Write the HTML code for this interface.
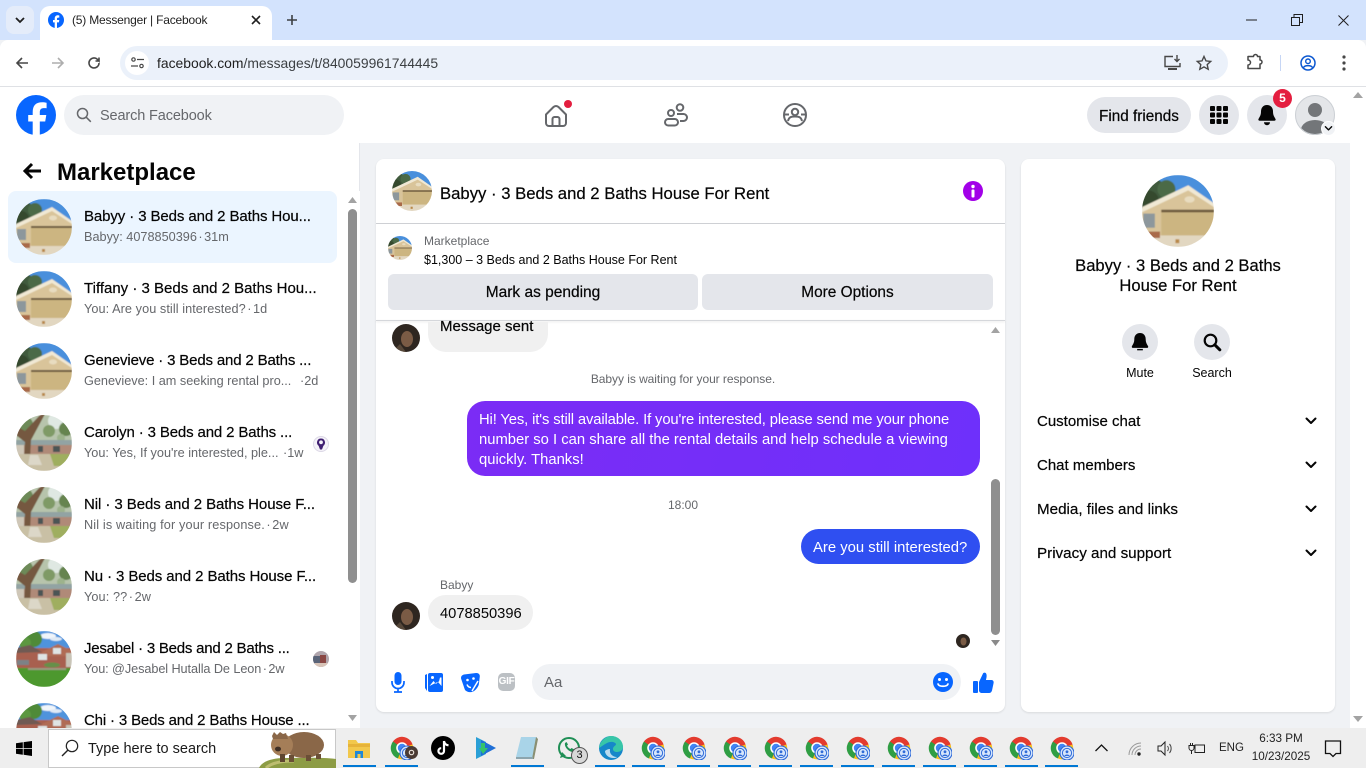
<!DOCTYPE html>
<html><head><meta charset="utf-8"><title>(5) Messenger | Facebook</title>
<style>
*{box-sizing:border-box}
html,body{margin:0;padding:0;width:1366px;height:768px;overflow:hidden;background:#f0f2f5;font-family:"Liberation Sans",sans-serif;color:#050505}
.a{position:absolute}
.t{position:absolute;white-space:nowrap}
.n{font-size:15px;line-height:20px;color:#050505;left:84px;-webkit-text-stroke:.2px #050505}
.s{font-size:12.7px;line-height:16px;color:#65676b;left:84px}
.s i{font-style:normal;margin:0 1.5px}
.av{position:absolute;left:16px;width:56px;height:56px}
.c{position:absolute;border-radius:50%;background:#e4e6eb}
.tb{position:absolute;top:765px;height:2px;width:33px;background:#0078d4}
svg{position:absolute;overflow:visible}
</style></head><body>
<svg width="0" height="0" style="position:absolute">
<defs>
<clipPath id="cp"><circle cx="28" cy="28" r="28"/></clipPath>
<filter id="bl" x="-5%" y="-5%" width="110%" height="110%"><feGaussianBlur stdDeviation=".45"/></filter>
<symbol id="h1" viewBox="0 0 56 56"><g clip-path="url(#cp)"><g filter="url(#bl)">
<rect width="56" height="56" fill="#4a8fdc"/>
<circle cx="9" cy="12" r="9" fill="#3f5a3c"/><circle cx="19" cy="11" r="7" fill="#4c6a47"/><circle cx="5" cy="20" r="8" fill="#34492f"/>
<path d="M0 27L36 10 56 24v32H0z" fill="#d9c49a"/>
<path d="M0 25L36 8 56 22v3L36 12 0 29z" fill="#f0e8d4"/>
<ellipse cx="37" cy="19" rx="4" ry="2.500" fill="#e8dcc0"/>
<rect x="15" y="28" width="41" height="20" fill="#ccb581"/><rect x="15" y="27" width="41" height="2" fill="#6d5a3d"/>
<rect x="1" y="30" width="9" height="11" fill="#8d979c"/>
<rect y="47" width="56" height="9" fill="#e2d7c1"/><rect x="0" y="44" width="14" height="5" fill="#a96b4a"/><rect x="26" y="50" width="3" height="3" fill="#b9894a"/>
</g></g></symbol>
<symbol id="h2" viewBox="0 0 56 56"><g clip-path="url(#cp)"><g filter="url(#bl)">
<rect width="56" height="56" fill="#b7c4ac"/>
<circle cx="8" cy="10" r="9" fill="#6d8a58"/><circle cx="40" cy="6" r="8" fill="#dfe8e2"/><circle cx="50" cy="14" r="7" fill="#668450"/><circle cx="33" cy="16" r="6" fill="#7f9a66"/><circle cx="45" cy="23" r="4" fill="#9db38c"/>
<rect y="25" width="56" height="5" fill="#92a3a3"/><rect y="30" width="56" height="9" fill="#b08a78"/>
<rect x="22" y="31" width="5" height="6" fill="#4b5555"/><rect x="37" y="31" width="7" height="6" fill="#4b5555"/><rect x="0" y="30" width="8" height="9" fill="#cfc7b8"/>
<path d="M0 11L9 16 25-1h4L15 25 14 44H8L9 27 0 20z" fill="#74593f"/>
<rect y="39" width="56" height="17" fill="#c9c0a5"/><path d="M34 39h22v12H38z" fill="#9fae5e"/><path d="M14 40h8l4 10H12z" fill="#dcd7c8"/>
</g></g></symbol>
<symbol id="h3" viewBox="0 0 56 56"><g clip-path="url(#cp)"><g filter="url(#bl)">
<rect width="56" height="56" fill="#4f93dc"/><ellipse cx="32" cy="5" rx="8" ry="3" fill="#f0f5fa"/><ellipse cx="40" cy="8" rx="6" ry="2" fill="#e0eaf5"/>
<circle cx="18" cy="8" r="8" fill="#4f8a38"/><circle cx="9" cy="12" r="6" fill="#5b973f"/>
<rect y="17" width="56" height="22" fill="#a8604f"/><path d="M0 17L14 14 26 21 0 22z" fill="#6f5a52"/><path d="M26 21L42 13 56 20v5H26z" fill="#b06c55"/>
<rect x="22" y="23" width="9" height="6" fill="#dfe4e4"/><rect x="37" y="17" width="8" height="6" fill="#dfe4e4"/><rect x="50" y="22" width="6" height="14" fill="#c9c5b8"/>
<rect x="1" y="29" width="12" height="5" fill="#7b8286"/><ellipse cx="36" cy="34" rx="8" ry="2.500" fill="#65904a"/>
<rect y="37" width="56" height="19" fill="#4e982f"/><path d="M12 37h38v2H12z" fill="#9a9a80"/>
</g></g></symbol>
<symbol id="ch" viewBox="0 0 24 24"><circle cx="12" cy="12" r="11" fill="#e33b2e"/><path d="M12 12L22.500 8.500A11 11 0 0 0 3 5.500z" fill="#e33b2e"/><path d="M12 12L3 5.500A11 11 0 0 0 8 22.500z" fill="#2f9e44"/><path d="M12 12L8 22.500A11 11 0 0 0 22.500 8.500z" fill="#f8c31c"/><circle cx="12" cy="12" r="5" fill="#4285f4" stroke="#fff" stroke-width="1.600"/>
<circle cx="17" cy="17" r="7" fill="#d7e6fb" stroke="#2f6bd8" stroke-width="1.100"/><circle cx="17" cy="17" r="4.600" fill="none" stroke="#2f6bd8" stroke-width="1"/><circle cx="17" cy="15.800" r="1.400" fill="#2f6bd8"/><path d="M14.300 20c.5-2 4.900-2 5.400 0" fill="#2f6bd8"/></symbol>
<symbol id="down" viewBox="0 0 16 16"><path d="M3.500 5.500L8 10l4.500-4.500" fill="none" stroke="#050505" stroke-width="2" stroke-linecap="round" stroke-linejoin="round"/></symbol>
</defs></svg>

<!-- Browser tab strip -->
<div class="a" style="left:0;top:0;width:1366px;height:40px;background:#d3e3fd"></div>
<div class="a" style="left:6px;top:6px;width:28px;height:28px;border-radius:8px;background:#e4ecfa"></div>
<svg style="left:14px;top:15px" width="12" height="10"><path d="M2 3l4 4 4-4" fill="none" stroke="#1f1f1f" stroke-width="1.800"/></svg>
<div class="a" style="left:40px;top:6px;width:232px;height:36px;background:#fff;border-radius:10px 10px 0 0"></div>
<svg style="left:48px;top:12px" width="16" height="16" viewBox="0 0 16 16"><circle cx="8" cy="8" r="8" fill="#0866ff"/><path d="M6.700 16V10.400H5V8h1.700V6.800C6.700 4.400 7.900 3.300 9.800 3.300c.6 0 1.200.1 1.500.2v2.100h-1c-1 0-1.300.5-1.300 1.300V8h2.300l-.4 2.400H9V16z" fill="#fff"/></svg>
<div class="t" style="left:72px;top:13px;font-size:12px;letter-spacing:-.19px;line-height:15px;color:#1f1f1f">(5) Messenger | Facebook</div>
<svg style="left:251px;top:15px" width="10" height="10"><path d="M1 1l8 8M9 1l-8 8" stroke="#1f1f1f" stroke-width="1.600"/></svg>
<svg style="left:286px;top:14px" width="12" height="12"><path d="M6 1v10M1 6h10" stroke="#3c4043" stroke-width="1.600"/></svg>
<svg style="left:1246px;top:19px" width="11" height="2"><path d="M0 1h11" stroke="#1f1f1f" stroke-width="1"/></svg>
<svg style="left:1291px;top:14px" width="12" height="12"><path d="M.5 3.500h8v8h-8zM3 3.500V.5h8.500v8h-3" fill="none" stroke="#1f1f1f" stroke-width="1"/></svg>
<svg style="left:1338px;top:15px" width="11" height="11"><path d="M.5.500l10 10M10.500.5l-10 10" stroke="#1f1f1f" stroke-width="1"/></svg>

<!-- Toolbar -->
<div class="a" style="left:0;top:40px;width:1366px;height:47px;background:#fff;border-bottom:1px solid #dfe1e5;border-radius:8px 8px 0 0"></div>
<svg style="left:15px;top:56px" width="14" height="14"><path d="M13 7H2M7 2L2 7l5 5" fill="none" stroke="#474747" stroke-width="1.600"/></svg>
<svg style="left:51px;top:56px" width="14" height="14"><path d="M1 7h11M7 2l5 5-5 5" fill="none" stroke="#aeaeae" stroke-width="1.600"/></svg>
<svg style="left:87px;top:56px" width="14" height="14"><path d="M12 7a5 5 0 1 1-1.600-3.700L12 5V1.500M12 5H8.500" fill="none" stroke="#474747" stroke-width="1.600"/></svg>
<div class="a" style="left:120px;top:46px;width:1108px;height:34px;border-radius:17px;background:#ebf1fa"></div>
<div class="a" style="left:125px;top:51px;width:24px;height:24px;border-radius:50%;background:#fff"></div>
<svg style="left:131px;top:57px" width="13" height="12"><circle cx="2.500" cy="2.500" r="1.700" fill="none" stroke="#474747" stroke-width="1.200"/><path d="M6 2.500h7M0 9h7" stroke="#474747" stroke-width="1.200"/><circle cx="10.500" cy="9" r="1.700" fill="none" stroke="#474747" stroke-width="1.200"/></svg>
<div class="t" style="left:157px;top:54px;font-size:13.900px;line-height:18px;color:#3c4043"><span style="color:#1f1f1f">facebook.com</span>/messages/t/840059961744445</div>
<svg style="left:1164px;top:55px" width="17" height="16"><path d="M9 1.500H1v10h15V8" fill="none" stroke="#474747" stroke-width="1.400"/><path d="M4 14h9" stroke="#474747" stroke-width="2"/><path d="M13 0v6M10.500 4l2.500 2.500L15.500 4" fill="none" stroke="#474747" stroke-width="1.400"/></svg>
<svg style="left:1196px;top:55px" width="16" height="16" viewBox="0 0 16 16"><path d="M8 1.500l2 4.400 4.700.5-3.500 3.200 1 4.700L8 11.900l-4.200 2.400 1-4.700L1.300 6.400 6 5.900z" fill="none" stroke="#474747" stroke-width="1.400"/></svg>
<svg style="left:1247px;top:54px" width="16" height="16" viewBox="0 0 16 16"><path d="M1 2.500h5.500a2 2 0 0 1 4 0H13v3.500a2 2 0 0 1 0 4v4.500H1v-3.500a2.500 2.500 0 0 0 0-5z" fill="none" stroke="#474747" stroke-width="1.500" stroke-linejoin="round"/></svg>
<div class="a" style="left:1280px;top:55px;width:1px;height:16px;background:#c6d6f5"></div>
<svg style="left:1300px;top:55px" width="16" height="16" viewBox="0 0 16 16"><circle cx="8" cy="8" r="7" fill="none" stroke="#0b57d0" stroke-width="1.500"/><circle cx="8" cy="6.300" r="2.300" fill="none" stroke="#0b57d0" stroke-width="1.400"/><path d="M3.500 12.500c1.500-2.500 7.500-2.500 9 0" fill="none" stroke="#0b57d0" stroke-width="1.400"/></svg>
<svg style="left:1342px;top:55px" width="4" height="16"><circle cx="2" cy="2" r="1.600" fill="#474747"/><circle cx="2" cy="8" r="1.600" fill="#474747"/><circle cx="2" cy="14" r="1.600" fill="#474747"/></svg>

<!-- FB header -->
<div class="a" style="left:0;top:87px;width:1350px;height:56px;background:#fff"></div>
<svg style="left:16px;top:95px" width="40" height="40" viewBox="0 0 40 40"><circle cx="20" cy="20" r="20" fill="#0866ff"/><path d="M16.700 40V26.500h-4.500V20h4.500v-2.800c0-6.800 3-10 9.600-10 1.300 0 3.400.3 4.300.5v5.500c-.5 0-1.300-.1-2.300-.1-3.300 0-4.500 1.200-4.500 4.400V20h6.500l-1.100 6.500h-5.400V40z" fill="#fff"/></svg>
<div class="a" style="left:64px;top:95px;width:280px;height:40px;border-radius:20px;background:#f0f2f5"></div>
<svg style="left:76px;top:107px" width="16" height="16"><circle cx="6.500" cy="6.500" r="5" fill="none" stroke="#65676b" stroke-width="1.500"/><path d="M10.300 10.300l4.500 4.500" stroke="#65676b" stroke-width="1.500"/></svg>
<div class="t" style="left:100px;top:106px;font-size:14.500px;letter-spacing:-.13px;line-height:20px;color:#65676b">Search Facebook</div>
<svg style="left:544px;top:103px" width="24" height="24" viewBox="0 0 24 24"><path d="M2 11.500L9.500 4a3.500 3.500 0 0 1 5 0L22 11.500V20a3 3 0 0 1-3 3H5a3 3 0 0 1-3-3z M8.500 23v-7a2 2 0 0 1 2-2h3a2 2 0 0 1 2 2v7" fill="none" stroke="#65676b" stroke-width="2" stroke-linejoin="round"/></svg>
<div class="a" style="left:564px;top:100px;width:8px;height:8px;border-radius:50%;background:#e41e3f"></div>
<svg style="left:664px;top:103px" width="24" height="24" viewBox="0 0 24 24"><circle cx="16" cy="4.500" r="3.300" fill="none" stroke="#65676b" stroke-width="2"/><circle cx="7" cy="10" r="3" fill="none" stroke="#65676b" stroke-width="2"/><rect x="1" y="16" width="13" height="6.500" rx="3.250" fill="none" stroke="#65676b" stroke-width="2"/><path d="M13 11h6.500a3.500 3.500 0 0 1 0 7H16" fill="none" stroke="#65676b" stroke-width="2"/></svg>
<svg style="left:783px;top:103px" width="24" height="24" viewBox="0 0 24 24"><circle cx="12" cy="12" r="11" fill="none" stroke="#65676b" stroke-width="2"/><circle cx="12" cy="9" r="3.200" fill="none" stroke="#65676b" stroke-width="2"/><path d="M5 18c1-4 3-4.500 7-4.500s6 .5 7 4.500M2 11.500h4M18 11.500h4" fill="none" stroke="#65676b" stroke-width="2"/></svg>
<div class="a" style="left:1087px;top:97px;width:104px;height:36px;border-radius:18px;background:#e4e6eb"></div>
<div class="t" style="left:1099px;top:107px;font-size:15.300px;line-height:20px;-webkit-text-stroke:.2px #050505">Find friends</div>
<div class="c" style="left:1199px;top:95px;width:40px;height:40px"></div>
<svg style="left:1210px;top:106px" width="18" height="18"><g fill="#050505"><rect width="5" height="5" rx="1"/><rect x="6.500" width="5" height="5" rx="1"/><rect x="13" width="5" height="5" rx="1"/><rect y="6.500" width="5" height="5" rx="1"/><rect x="6.500" y="6.500" width="5" height="5" rx="1"/><rect x="13" y="6.500" width="5" height="5" rx="1"/><rect y="13" width="5" height="5" rx="1"/><rect x="6.500" y="13" width="5" height="5" rx="1"/><rect x="13" y="13" width="5" height="5" rx="1"/></g></svg>
<div class="c" style="left:1247px;top:95px;width:40px;height:40px"></div>
<svg style="left:1258px;top:105px" width="18" height="20" viewBox="0 0 18 20"><path d="M9 0c4 0 6 3 6 6.500 0 4 1.500 5.500 2.500 7.500.5 1-.2 1.700-1.200 1.700H1.700C.7 15.700 0 15 .5 14 1.500 12 3 10.500 3 6.500 3 3 5 0 9 0z" fill="#050505"/><path d="M6 17.200h6a3 3 0 0 1-6 0z" fill="#050505"/></svg>
<div class="a" style="left:1273px;top:89px;width:19px;height:19px;border-radius:50%;background:#e41e3f;color:#fff;font-size:12px;font-weight:700;line-height:19px;text-align:center">5</div>
<svg style="left:1295px;top:95px" width="40" height="40" viewBox="0 0 40 40"><defs><clipPath id="pc"><circle cx="20" cy="20" r="20"/></clipPath></defs><g clip-path="url(#pc)"><rect width="40" height="40" fill="#e4e6e9"/><circle cx="20" cy="15" r="7" fill="#737679"/><ellipse cx="20" cy="35" rx="14" ry="10" fill="#737679"/></g><circle cx="20" cy="20" r="19.500" fill="none" stroke="#ccd0d5"/></svg>
<div class="a" style="left:1321px;top:121px;width:15px;height:15px;border-radius:50%;background:#f0f2f5;border:1px solid #fff"></div>
<svg style="left:1323px;top:123px" width="11" height="11" viewBox="0 0 16 16"><use href="#down" width="16" height="16"/></svg>

<!-- Page scrollbar -->
<div class="a" style="left:1350px;top:87px;width:16px;height:641px;background:#fff"></div>
<svg style="left:1353px;top:92px" width="10" height="6"><path d="M0 6l5-6 5 6z" fill="#a3a3a3"/></svg>
<svg style="left:1353px;top:716px" width="10" height="6"><path d="M0 0l5 6 5-6z" fill="#a3a3a3"/></svg>

<!-- Left panel -->
<div class="a" style="left:0;top:143px;width:360px;height:585px;background:#fff;border-right:1px solid #e4e6eb"></div>
<svg style="left:22px;top:162px" width="20" height="18"><path d="M19 9H3M10 2L3 9l7 7" fill="none" stroke="#050505" stroke-width="3"/></svg>
<div class="t" style="left:57px;top:157px;font-size:24px;line-height:31px;font-weight:700">Marketplace</div>
<div class="a" style="left:8px;top:191px;width:329px;height:72px;border-radius:8px;background:#ebf5ff"></div>

<svg class="av" style="top:199px"><use href="#h1" width="56" height="56"/></svg>
<div class="t n" style="top:207px;letter-spacing:-.1px">Babyy · 3 Beds and 2 Baths Hou...</div>
<div class="t s" style="top:229px">Babyy: 4078850396<i>·</i>31m</div>
<svg class="av" style="top:271px"><use href="#h1" width="56" height="56"/></svg>
<div class="t n" style="top:279px">Tiffany · 3 Beds and 2 Baths Hou...</div>
<div class="t s" style="top:301px;letter-spacing:.07px">You: Are you still interested?<i>·</i>1d</div>
<svg class="av" style="top:343px"><use href="#h1" width="56" height="56"/></svg>
<div class="t n" style="top:351px;letter-spacing:-.16px">Genevieve · 3 Beds and 2 Baths ...</div>
<div class="t s" style="top:373px">Genevieve: I am seeking rental pro...</div><div class="t s" style="left:300px;top:373px">·2d</div>
<svg class="av" style="top:415px"><use href="#h2" width="56" height="56"/></svg>
<div class="t n" style="top:423px;letter-spacing:-.14px">Carolyn · 3 Beds and 2 Baths ...</div>
<div class="t s" style="top:445px">You: Yes, If you're interested, ple...</div><div class="t s" style="left:283px;top:445px">·1w</div>
<svg style="left:313px;top:436px" width="16" height="16" viewBox="0 0 16 16"><circle cx="8" cy="8" r="7.500" fill="#f4f2f8" stroke="#dcd8e6"/><path d="M8 2.500a4 4 0 0 1 2.400 7.200L9 13.500H7L5.600 9.700A4 4 0 0 1 8 2.500z" fill="#3f1f72"/><circle cx="8" cy="6.300" r="1.900" fill="#f4f2f8"/></svg>
<svg class="av" style="top:487px"><use href="#h2" width="56" height="56"/></svg>
<div class="t n" style="top:495px;letter-spacing:-.07px">Nil · 3 Beds and 2 Baths House F...</div>
<div class="t s" style="top:517px;letter-spacing:.14px">Nil is waiting for your response.<i>·</i>2w</div>
<svg class="av" style="top:559px"><use href="#h2" width="56" height="56"/></svg>
<div class="t n" style="top:567px;letter-spacing:-.09px">Nu · 3 Beds and 2 Baths House F...</div>
<div class="t s" style="top:589px;letter-spacing:.1px">You: ??<i>·</i>2w</div>
<svg class="av" style="top:631px"><use href="#h3" width="56" height="56"/></svg>
<div class="t n" style="top:639px;letter-spacing:-.22px">Jesabel · 3 Beds and 2 Baths ...</div>
<div class="t s" style="top:661px;letter-spacing:-.08px">You: @Jesabel Hutalla De Leon<i>·</i>2w</div>
<svg style="left:313px;top:651px" width="16" height="16" viewBox="0 0 16 16"><defs><clipPath id="m"><circle cx="8" cy="8" r="8"/></clipPath></defs><g clip-path="url(#m)"><rect width="16" height="16" fill="#b0a5ac"/><rect x="0" y="5" width="7" height="8" fill="#5a6478"/><rect x="7" y="4" width="6" height="8" fill="#8a4744"/><rect y="12" width="16" height="4" fill="#d8c4b8"/></g></svg>
<div class="a" style="left:16px;top:703px;width:56px;height:25px;overflow:hidden"><svg style="left:0;top:0" width="56" height="56"><use href="#h3" width="56" height="56"/></svg></div>
<div class="t n" style="top:711px;letter-spacing:-.16px">Chi · 3 Beds and 2 Baths House ...</div>
<!-- left scrollbar -->
<div class="a" style="left:346px;top:191px;width:14px;height:537px;background:#fff"></div>
<svg style="left:348px;top:197px" width="9" height="6"><path d="M0 6l4.500-6 4.500 6z" fill="#a3a3a3"/></svg>
<div class="a" style="left:348px;top:209px;width:9px;height:374px;border-radius:5px;background:#8f8f8f"></div>
<svg style="left:348px;top:715px" width="9" height="6"><path d="M0 0l4.500 6 4.500-6z" fill="#a3a3a3"/></svg>

<!-- Chat card -->
<div class="a" style="left:376px;top:159px;width:629px;height:553px;background:#fff;border-radius:8px;box-shadow:0 1px 2px rgba(0,0,0,.1)"></div>
<svg style="left:392px;top:171px" width="40" height="40"><use href="#h1" width="40" height="40"/></svg>
<div class="t" style="left:440px;top:183px;font-size:16.700px;line-height:22px;-webkit-text-stroke:.2px #050505">Babyy · 3 Beds and 2 Baths House For Rent</div>
<svg style="left:963px;top:181px" width="20" height="20" viewBox="0 0 20 20"><circle cx="10" cy="10" r="10" fill="#a200e8"/><circle cx="10" cy="5.500" r="1.700" fill="#fff"/><rect x="8.500" y="8.500" width="3" height="8" rx="1" fill="#fff"/></svg>
<div class="a" style="left:376px;top:223px;width:629px;height:1px;background:#ced0d4"></div>
<svg style="left:388px;top:236px" width="24" height="24"><use href="#h1" width="24" height="24"/></svg>
<div class="t" style="left:424px;top:233px;font-size:12px;line-height:16px;color:#65676b">Marketplace</div>
<div class="t" style="left:424px;top:252px;font-size:12.500px;line-height:16px">$1,300 – 3 Beds and 2 Baths House For Rent</div>
<div class="a" style="left:388px;top:274px;width:310px;height:36px;border-radius:6px;background:#e4e6eb;font-size:15.500px;line-height:37px;text-align:center;-webkit-text-stroke:.2px #050505">Mark as pending</div>
<div class="a" style="left:702px;top:274px;width:291px;height:36px;border-radius:6px;background:#e4e6eb;font-size:15.400px;line-height:37px;text-align:center;-webkit-text-stroke:.2px #050505">More Options</div>
<div class="a" style="left:376px;top:320px;width:629px;height:1px;background:#d5d7db;box-shadow:0 1px 2px rgba(0,0,0,.12)"></div>

<!-- Messages -->
<svg style="left:392px;top:324px" width="28" height="28" viewBox="0 0 28 28"><defs><clipPath id="f"><circle cx="14" cy="14" r="14"/></clipPath></defs><g clip-path="url(#f)"><rect width="28" height="28" fill="#2e2620"/><ellipse cx="15" cy="15" rx="6" ry="8" fill="#7a5b45"/><path d="M0 28l8-8 6 8z" fill="#57483a"/></g></svg>
<div class="a" style="left:428px;top:322px;width:120px;height:30px;background:#f0f0f0;border-radius:0 0 18px 18px"></div>
<div class="t" style="left:440px;top:317px;font-size:15px;line-height:20px;-webkit-text-stroke:.2px #050505">Message sent</div>
<div class="t" style="left:376px;width:614px;top:371px;font-size:12px;line-height:16px;color:#65676b;text-align:center;letter-spacing:-.05px">Babyy is waiting for your response.</div>
<div class="a" style="left:467px;top:401px;width:513px;height:75px;border-radius:18px;background:linear-gradient(100deg,#7b2cf5,#6e30fb)"></div>
<div class="t" style="left:479px;top:410px;font-size:14.800px;line-height:20px;color:#fff"><span style="letter-spacing:-.13px">Hi! Yes, it's still available. If you're interested, please send me your phone</span><br>number so I can share all the rental details and help schedule a viewing<br>quickly. Thanks!</div>
<div class="t" style="left:376px;width:614px;top:497px;font-size:12px;line-height:16px;color:#65676b;text-align:center">18:00</div>
<div class="a" style="left:801px;top:529px;width:179px;height:35px;border-radius:18px;background:#2f4ff1"></div>
<div class="t" style="left:813px;top:538px;font-size:14.850px;line-height:20px;color:#fff">Are you still interested?</div>
<div class="t" style="left:440px;top:577px;font-size:12px;line-height:16px;color:#65676b">Babyy</div>
<svg style="left:392px;top:602px" width="28" height="28" viewBox="0 0 28 28"><g clip-path="url(#f)"><rect width="28" height="28" fill="#2e2620"/><ellipse cx="15" cy="15" rx="6" ry="8" fill="#7a5b45"/><path d="M0 28l8-8 6 8z" fill="#57483a"/></g></svg>
<div class="a" style="left:428px;top:595px;width:105px;height:35px;border-radius:18px;background:#f0f0f0"></div>
<div class="t" style="left:440px;top:604px;font-size:14.700px;line-height:20px">4078850396</div>
<svg style="left:956px;top:634px" width="14" height="14" viewBox="0 0 28 28"><g clip-path="url(#f)"><rect width="28" height="28" fill="#2e2620"/><ellipse cx="15" cy="15" rx="6" ry="8" fill="#7a5b45"/></g></svg>
<!-- chat scrollbar -->
<svg style="left:991px;top:327px" width="9" height="6"><path d="M0 6l4.500-6 4.500 6z" fill="#a3a3a3"/></svg>
<div class="a" style="left:991px;top:479px;width:9px;height:156px;border-radius:5px;background:#8f8f8f"></div>
<svg style="left:991px;top:640px" width="9" height="6"><path d="M0 0l4.500 6 4.500-6z" fill="#8a8a8a"/></svg>

<!-- Composer -->
<svg style="left:391px;top:672px" width="14" height="21" viewBox="0 0 14 21"><rect x="3.500" y="0" width="7" height="13" rx="3.500" fill="#0866ff"/><path d="M1 9v1.500a6 6 0 0 0 12 0V9M7 16.500V20M3 20h8" fill="none" stroke="#0866ff" stroke-width="1.700"/></svg>
<svg style="left:425px;top:673px" width="18" height="19" viewBox="0 0 18 19"><path d="M0 2v13l2 3V1z" fill="#0866ff"/><rect x="3" y="0" width="15" height="19" rx="2" fill="#0866ff"/><circle cx="7.500" cy="4.500" r="1.500" fill="#fff"/><path d="M4.500 13l4-5 2.500 3 2-2 3.500 4v-8.500H15l-1 4-2.500 1z" fill="#fff"/></svg>
<svg style="left:461px;top:673px" width="19" height="19" viewBox="0 0 19 19"><path d="M3 1.500L15 0c2.500-.2 4 1.500 3.800 3.500l-1 8c-.5 2.500-4 7-7 7.500-3 .5-6-.5-7-2.500L.2 6C-.5 3.500 1 2 3 1.500z" fill="#0866ff"/><circle cx="6.500" cy="7" r="1.300" fill="#fff"/><circle cx="12.500" cy="5.500" r="1.300" fill="#fff"/><path d="M6 11.500c1 2.500 2.500 3 4 3M11 18l6-10" fill="none" stroke="#fff" stroke-width="1.500"/></svg>
<div class="a" style="left:498px;top:673px;width:17px;height:18px;border-radius:5px;background:#bcc0c4;color:#fff;font-size:10px;font-weight:700;line-height:18px;text-align:center;letter-spacing:-.3px">GIF</div>
<div class="a" style="left:532px;top:664px;width:429px;height:36px;border-radius:18px;background:#f0f2f5"></div>
<div class="t" style="left:544px;top:673px;font-size:15px;line-height:20px;color:#65676b">Aa</div>
<svg style="left:933px;top:672px" width="20" height="20" viewBox="0 0 20 20"><circle cx="10" cy="10" r="10" fill="#0866ff"/><circle cx="6.500" cy="7.500" r="1.500" fill="#fff"/><circle cx="13.500" cy="7.500" r="1.500" fill="#fff"/><path d="M5 12c1 3 9 3 10 0" fill="none" stroke="#fff" stroke-width="1.700" stroke-linecap="round"/></svg>
<svg style="left:973px;top:672px" width="21" height="21" viewBox="0 0 21 21"><rect x="0" y="9" width="5" height="12" rx="1" fill="#0866ff"/><path d="M6 10L10 1.500C10.500.3 13 0 13.500 2.500 14 5 13 7 13 8h5.500c2 0 2.500 2 2 3.500l-1.500 7c-.4 1.500-1.500 2.500-3 2.500H9c-1.500 0-3-1-3-2.500z" fill="#0866ff"/></svg>

<!-- Right card -->
<div class="a" style="left:1021px;top:159px;width:314px;height:553px;background:#fff;border-radius:8px;box-shadow:0 1px 2px rgba(0,0,0,.1)"></div>
<svg style="left:1142px;top:175px" width="72" height="72"><use href="#h1" width="72" height="72"/></svg>
<div class="t" style="left:1021px;width:314px;top:256px;font-size:16.600px;line-height:20px;text-align:center;-webkit-text-stroke:.2px #050505">Babyy · 3 Beds and 2 Baths<br>House For Rent</div>
<div class="c" style="left:1122px;top:324px;width:36px;height:36px"></div>
<svg style="left:1131px;top:333px" width="18" height="19" viewBox="0 0 18 20"><path d="M9 0c4 0 6 3 6 6.500 0 4 1.500 5.500 2.500 7.500.5 1-.2 1.700-1.200 1.700H1.700C.7 15.700 0 15 .5 14 1.500 12 3 10.500 3 6.500 3 3 5 0 9 0z" fill="#050505"/><path d="M6 17.500h6" stroke="#050505" stroke-width="1.500"/></svg>
<div class="c" style="left:1194px;top:324px;width:36px;height:36px"></div>
<svg style="left:1203px;top:333px" width="18" height="18"><circle cx="7.500" cy="7.500" r="5.800" fill="none" stroke="#050505" stroke-width="2.200"/><path d="M11.800 11.800l5 5" stroke="#050505" stroke-width="3" stroke-linecap="round"/></svg>
<div class="t" style="left:1100px;width:80px;top:365px;font-size:12.500px;line-height:16px;text-align:center">Mute</div>
<div class="t" style="left:1172px;width:80px;top:365px;font-size:12.500px;line-height:16px;text-align:center">Search</div>
<div class="t" style="left:1037px;top:412px;font-size:15px;line-height:20px;-webkit-text-stroke:.2px #050505">Customise chat</div>
<svg style="left:1303px;top:413px" width="16" height="16"><use href="#down" width="16" height="16"/></svg>
<div class="t" style="left:1037px;top:456px;font-size:15px;line-height:20px;-webkit-text-stroke:.2px #050505">Chat members</div>
<svg style="left:1303px;top:457px" width="16" height="16"><use href="#down" width="16" height="16"/></svg>
<div class="t" style="left:1037px;top:500px;font-size:15.200px;line-height:20px;-webkit-text-stroke:.2px #050505">Media, files and links</div>
<svg style="left:1303px;top:501px" width="16" height="16"><use href="#down" width="16" height="16"/></svg>
<div class="t" style="left:1037px;top:544px;font-size:15.200px;line-height:20px;-webkit-text-stroke:.2px #050505">Privacy and support</div>
<svg style="left:1303px;top:545px" width="16" height="16"><use href="#down" width="16" height="16"/></svg>

<!-- Taskbar -->
<div class="a" style="left:0;top:728px;width:1366px;height:40px;background:#eeeeee"></div>
<svg style="left:16px;top:741px" width="16" height="15" viewBox="0 0 16 15"><path d="M0 2.200L6.800 1.200V7H0zM7.600 1.100L16 0v7H7.600zM0 7.800h6.800v6L0 12.800zM7.600 7.800H16V15l-8.400-1.200z" fill="#000"/></svg>
<div class="a" style="left:48px;top:729px;width:288px;height:39px;background:#fff;border:1px solid #c8c8c8;overflow:hidden"></div>
<svg style="left:61px;top:739px" width="18" height="18"><circle cx="11" cy="7" r="5.700" fill="none" stroke="#222" stroke-width="1.200"/><path d="M7 11l-6 6" stroke="#222" stroke-width="1.400"/></svg>
<div class="t" style="left:88px;top:739px;font-size:14.500px;line-height:20px;color:#1a1a1a">Type here to search</div>
<svg style="left:258px;top:730px" width="78" height="38" viewBox="0 0 78 38"><path d="M1 38c3-7 14-10 26-10 14 0 36-1 51 1v9z" fill="#8d9c45"/><path d="M8 38c5-5 16-7 28-7" fill="none" stroke="#bdbd70" stroke-width="3"/><ellipse cx="46" cy="15" rx="20" ry="13" fill="#8a6748"/><ellipse cx="24" cy="15" rx="11" ry="11" fill="#a57e58"/><path d="M14 6l2-4 3 3 3-3 3 2 3-1 2 6H15z" fill="#8a6748"/><rect x="22" y="24" width="5" height="8" fill="#5e4630"/><rect x="31" y="25" width="5" height="7" fill="#6a4f36"/><rect x="48" y="25" width="5" height="6" fill="#6a4f36"/><rect x="58" y="24" width="5" height="5" fill="#6a4f36"/><ellipse cx="20" cy="19" rx="3" ry="2.400" fill="#3f2f25"/></svg>

<svg style="left:348px;top:739px" width="22" height="19" viewBox="0 0 22 19"><path d="M0 1h8l2 3h12v15H0z" fill="#f2c84c"/><rect y="5" width="22" height="3" fill="#e6b33a"/><rect x="7" y="12" width="8" height="7" fill="#1f88d8"/><rect x="9.500" y="15" width="3" height="4" fill="#f2c84c"/></svg>
<svg style="left:390px;top:736px" width="24" height="24"><use href="#ch" width="24" height="24"/></svg>
<svg style="left:405px;top:746px" width="13" height="13"><circle cx="6.500" cy="6.500" r="6.500" fill="#4a3a34"/><circle cx="6.500" cy="6.500" r="2.200" fill="none" stroke="#e9e0d8" stroke-width="1.200"/></svg>
<svg style="left:431px;top:736px" width="24" height="24" viewBox="0 0 24 24"><circle cx="12" cy="12" r="12" fill="#000"/><path d="M13 5v10a2.800 2.800 0 1 1-2.800-2.800M13 5c.3 2.500 2 4 4.500 4.300" fill="none" stroke="#fff" stroke-width="2.200"/></svg>
<svg style="left:476px;top:737px" width="20" height="22" viewBox="0 0 20 22"><path d="M0 0l10 5v12L0 22z" fill="#2a9fd6"/><path d="M5 3l15 8-15 8z" fill="#1f6fd6"/><path d="M5 6h4v5h3l-5 6-4-6h2z" fill="#34c36a"/></svg>
<svg style="left:515px;top:737px" width="23" height="22" viewBox="0 0 23 22"><path d="M6 0h16l-4 20H1z" fill="#a9d4e8"/><path d="M21 0l2 2-4 20h-2z" fill="#8a8f72"/><path d="M1 20h17v2H1z" fill="#8ca5ae"/></svg>
<svg style="left:557px;top:736px" width="24" height="24" viewBox="0 0 24 24"><circle cx="12" cy="12" r="10" fill="none" stroke="#1f8f55" stroke-width="2"/><path d="M3 22l2-6 4 4z" fill="#1f8f55"/><path d="M8 7c-1 4 4 9 8 9l1.500-2.500-3-1.500-1 1c-1.500-.5-3-2-3.500-3.500l1-1L9.500 6z" fill="#1f8f55"/></svg>
<div class="a" style="left:571px;top:747px;width:17px;height:17px;border-radius:50%;background:#d8d8d8;border:1px solid #555;font-size:11px;line-height:15px;text-align:center;color:#111">3</div>
<svg style="left:599px;top:736px" width="24" height="24" viewBox="0 0 24 24"><circle cx="12" cy="12" r="12" fill="#1687c9"/><path d="M0 12C1 4 8 0 12 0c7 0 12 5 12 11 0 3-3 5-6 5-2 0-4-1-4-3 0-3 3-3 3-5-1-2-5-3-9-1C4 9 2 11 0 12z" fill="#38c6a8"/><path d="M6 15c0 4 4 7 8 7 2 0 3 0 4-1-4 0-8-3-7-8-2 0-4 1-5 2z" fill="#fff" opacity=".7"/></svg>

<svg style="left:641px;top:736px" width="24" height="24"><use href="#ch" width="24" height="24"/></svg>
<svg style="left:682px;top:736px" width="24" height="24"><use href="#ch" width="24" height="24"/></svg>
<svg style="left:723px;top:736px" width="24" height="24"><use href="#ch" width="24" height="24"/></svg>
<svg style="left:764px;top:736px" width="24" height="24"><use href="#ch" width="24" height="24"/></svg>
<svg style="left:805px;top:736px" width="24" height="24"><use href="#ch" width="24" height="24"/></svg>
<svg style="left:846px;top:736px" width="24" height="24"><use href="#ch" width="24" height="24"/></svg>
<svg style="left:887px;top:736px" width="24" height="24"><use href="#ch" width="24" height="24"/></svg>
<svg style="left:928px;top:736px" width="24" height="24"><use href="#ch" width="24" height="24"/></svg>
<svg style="left:969px;top:736px" width="24" height="24"><use href="#ch" width="24" height="24"/></svg>
<svg style="left:1009px;top:736px" width="24" height="24"><use href="#ch" width="24" height="24"/></svg>
<svg style="left:1050px;top:736px" width="24" height="24"><use href="#ch" width="24" height="24"/></svg>

<div class="tb" style="left:343px"></div><div class="tb" style="left:385px"></div><div class="tb" style="left:511px"></div><div class="tb" style="left:595px;width:30px"></div>
<div class="tb" style="left:632px"></div><div class="tb" style="left:677px"></div><div class="tb" style="left:718px"></div><div class="tb" style="left:759px"></div><div class="tb" style="left:800px"></div><div class="tb" style="left:841px"></div><div class="tb" style="left:882px"></div><div class="tb" style="left:923px"></div><div class="tb" style="left:964px"></div><div class="tb" style="left:1005px"></div><div class="tb" style="left:1045px"></div>

<svg style="left:1095px;top:744px" width="13" height="8"><path d="M.5 7L6.500 1l6 6" fill="none" stroke="#111" stroke-width="1.300"/></svg>
<svg style="left:1128px;top:742px" width="14" height="14" viewBox="0 0 14 14"><path d="M1 13A12 12 0 0 1 13 1M4 13A9 9 0 0 1 13 4M7 13a6 6 0 0 1 6-6" fill="none" stroke="#9a9a9a" stroke-width="1"/><circle cx="11" cy="12" r="1.700" fill="#222"/></svg>
<svg style="left:1157px;top:741px" width="16" height="15" viewBox="0 0 16 15"><path d="M1 5h3l4-4v13l-4-4H1z" fill="none" stroke="#222"/><path d="M10.500 5a4 4 0 0 1 0 5M12.500 3a7 7 0 0 1 0 9" fill="none" stroke="#444"/></svg>
<svg style="left:1189px;top:742px" width="16" height="13" viewBox="0 0 16 13"><rect x="6" y="3" width="9.500" height="7.500" fill="none" stroke="#222"/><path d="M0 3.500h5v2.500a2.500 2.500 0 0 1-5 0zM1.500 1v2.500M3.500 1v2.500M2.500 8.500V12" fill="none" stroke="#222"/></svg>
<div class="t" style="left:1219px;top:741px;font-size:11.500px;line-height:14px;color:#222">ENG</div>
<div class="t" style="left:1250px;width:62px;top:730px;font-size:11.700px;line-height:18px;color:#222;text-align:center">6:33 PM<br>10/23/2025</div>
<svg style="left:1324px;top:740px" width="18" height="18" viewBox="0 0 18 18"><path d="M1.500 1h15v12.500H12l-3 3-3-3H1.500z" fill="none" stroke="#111" stroke-width="1.300"/></svg>
</body></html>
